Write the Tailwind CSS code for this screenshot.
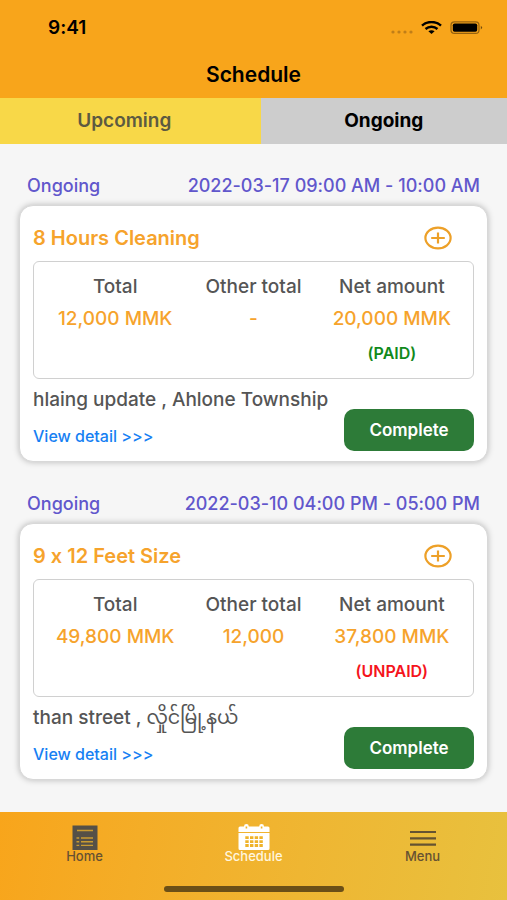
<!DOCTYPE html>
<html lang="en">
<head>
<meta charset="utf-8">
<meta name="viewport" content="width=device-width, initial-scale=1">
<title>Schedule</title>
<script src="https://cdn.jsdelivr.net/npm/@tailwindcss/browser@4"></script>
</head>
<body class="flex min-h-screen flex-col bg-[#f6f6f6] font-['Inter','Noto_Sans_Myanmar','Noto_Sans',sans-serif] text-[18px] leading-6 font-medium text-[#555] [font-feature-settings:'calt'_0]">
  <header class="bg-[#f8a51b] text-black">
    <div class="flex items-center justify-between pt-4 pr-6 pl-12">
      <span class="text-[19px] font-semibold">9:41</span>
      <div class="flex items-center gap-2">
        <svg class="mt-2 h-1 w-6" viewBox="0 0 24 4" fill="#c07e18" aria-hidden="true"><circle cx="4" cy="2" r="1.600"/><circle cx="10" cy="2" r="1.600"/><circle cx="16" cy="2" r="1.600"/><circle cx="22" cy="2" r="1.600"/></svg>
        <svg class="h-[14px] w-[21px]" viewBox="0 0 21 14" fill="none" stroke="#000" stroke-width="2.400" aria-hidden="true"><path d="M1 4.600C6.200 -.2 14.800 -.2 20 4.600"/><path d="M4.500 8C8 4.900 13 4.900 16.500 8"/><path d="M7.400 10.300C9.200 8.800 11.800 8.800 13.600 10.300L10.500 13.100Z" fill="#000" stroke="none"/></svg>
        <svg class="h-[14px] w-[33px]" viewBox="0 0 33 14" aria-hidden="true"><rect x="1" y=".8" width="28" height="11.600" rx="3.500" fill="none" stroke="#96620f" stroke-width="1.200"/><rect x="2.800" y="2.400" width="24.400" height="8.400" rx="1.800"/><path d="M30.800 4.800Q33.400 6.600 30.800 8.400Z" fill="#704a0c"/></svg>
      </div>
    </div>
    <h1 class="pt-[23px] pb-[11px] text-center text-[21px] font-semibold">Schedule</h1>
  </header>
  <div role="tablist" class="flex h-[46px] text-[19px]">
    <button role="tab" aria-selected="false" class="w-[51.4%] bg-[#f8d848] pr-3 font-semibold text-[#5d5a41]">Upcoming</button>
    <button role="tab" aria-selected="true" class="flex-1 bg-[#cdcdcd] font-bold text-black">Ongoing</button>
  </div>

  <main class="flex-1 px-[19px] pt-[30px]">
    <section class="mb-[30px]">
      <div class="flex justify-between px-2 pb-[7px] text-[#6157cc]"><span>Ongoing</span><span>2022-03-17 09:00 AM - 10:00 AM</span></div>
      <article class="rounded-[14px] border border-[#d8d8d8] bg-white px-[13px] pb-[10px] shadow-[0_0_6px_rgba(0,0,0,0.25)]">
        <div class="flex h-[55px] items-center justify-between pt-2 pr-[22px]">
          <h2 class="text-[20px] font-semibold text-[#f6a32c]">8 Hours Cleaning</h2>
          <button aria-label="Expand"><svg class="h-6 w-7" viewBox="0 0 28 24" fill="none" stroke="#eda028" stroke-width="2.200"><ellipse cx="14" cy="12" rx="12.600" ry="10.300"/><path d="M7.200 12H20.800M14 6.400V17.600"/></svg></button>
        </div>
        <div class="rounded-md border border-[#d0d0d0] px-3 pt-[9px] pb-[7px]">
          <table class="w-full table-fixed text-center text-[19px]">
            <thead><tr class="h-8"><th class="font-medium">Total</th><th class="font-medium">Other total</th><th class="font-medium">Net amount</th></tr></thead>
            <tbody>
              <tr class="h-8 text-[#f6a32c]"><td>12,000 MMK</td><td>-</td><td>20,000 MMK</td></tr>
              <tr class="h-9 text-[16px] font-semibold text-[#118a1b]"><td></td><td></td><td>(PAID)</td></tr>
            </tbody>
          </table>
        </div>
        <div class="flex items-end justify-between">
          <div class="flex h-[72px] min-w-0 flex-col justify-between pt-[9px]">
            <p class="w-0 text-[19px] whitespace-nowrap">hlaing update , Ahlone Township</p>
            <a href="#" class="pb-[3px] text-[16px] text-[#1680f3]">View detail &gt;&gt;&gt;</a>
          </div>
          <button class="h-[42px] w-[130px] rounded-[10px] bg-[#2d7b38] text-[17px] font-semibold text-white">Complete</button>
        </div>
      </article>
    </section>

    <section class="mb-[30px]">
      <div class="flex justify-between px-2 pb-[7px] text-[#6157cc]"><span>Ongoing</span><span>2022-03-10 04:00 PM - 05:00 PM</span></div>
      <article class="rounded-[14px] border border-[#d8d8d8] bg-white px-[13px] pb-[10px] shadow-[0_0_6px_rgba(0,0,0,0.25)]">
        <div class="flex h-[55px] items-center justify-between pt-2 pr-[22px]">
          <h2 class="text-[20px] font-semibold text-[#f6a32c]">9 x 12 Feet Size</h2>
          <button aria-label="Expand"><svg class="h-6 w-7" viewBox="0 0 28 24" fill="none" stroke="#eda028" stroke-width="2.200"><ellipse cx="14" cy="12" rx="12.600" ry="10.300"/><path d="M7.200 12H20.800M14 6.400V17.600"/></svg></button>
        </div>
        <div class="rounded-md border border-[#d0d0d0] px-3 pt-[9px] pb-[7px]">
          <table class="w-full table-fixed text-center text-[19px]">
            <thead><tr class="h-8"><th class="font-medium">Total</th><th class="font-medium">Other total</th><th class="font-medium">Net amount</th></tr></thead>
            <tbody>
              <tr class="h-8 text-[#f6a32c]"><td>49,800 MMK</td><td>12,000</td><td>37,800 MMK</td></tr>
              <tr class="h-9 text-[16px] font-semibold text-[#f5141c]"><td></td><td></td><td>(UNPAID)</td></tr>
            </tbody>
          </table>
        </div>
        <div class="flex items-end justify-between">
          <div class="flex h-[72px] min-w-0 flex-col justify-between pt-[9px]">
            <p class="w-0 text-[19px] whitespace-nowrap">than street , <span lang="my" class="font-normal">လှိုင်မြို့နယ်</span></p>
            <a href="#" class="pb-[3px] text-[16px] text-[#1680f3]">View detail &gt;&gt;&gt;</a>
          </div>
          <button class="h-[42px] w-[130px] rounded-[10px] bg-[#2d7b38] text-[17px] font-semibold text-white">Complete</button>
        </div>
      </article>
    </section>
  </main>

  <footer class="bg-linear-100 from-[#f8a51b] to-[#e8c13e]">
    <nav class="grid grid-cols-3 pt-3 text-[13px] leading-3 text-[#665132]">
      <a href="#" class="flex flex-col items-center"><svg class="h-[26px] w-[26px]" viewBox="0 0 26 26" aria-hidden="true"><path fill="#555047" d="M.5 1.500H25.500V26H.5Z"/><path d="M5 6.500H21M9 14H21M9 17.700H21M9 21.400H21M4.500 14H7.200M4.500 17.700H7.200M4.500 21.400H7.200" stroke="#c99b32" stroke-width="1.400"/></svg>Home</a>
      <a href="#" aria-current="page" class="flex flex-col items-center text-[#fff6df]"><svg class="h-[26px] w-8" viewBox="0 0 32 26" aria-hidden="true"><path fill="#fff" d="M2 2.500H6A2.400 2.400 0 0 1 10.800 2.500H21.200A2.400 2.400 0 0 1 26 2.500H30Q31.500 2.500 31.500 4V8H.5V4Q.5 2.500 2 2.500ZM.5 9H31.500V24.500Q31.500 26 30 26H2Q.5 26 .5 24.500Z"/><path fill="#efb32a" d="M7.600 2.500H9.200V4.400H7.600ZM22.800 2.500H24.400V4.400H22.800ZM7.300 12.300H10.700V15.100H7.300ZM12 12.300H15.400V15.100H12ZM16.700 12.300H20.100V15.100H16.700ZM21.400 12.300H24.800V15.100H21.400ZM7.300 16.200H10.700V19H7.300ZM12 16.200H15.400V19H12ZM16.700 16.200H20.100V19H16.700ZM21.400 16.200H24.800V19H21.400ZM7.300 20.100H10.700V22.900H7.300ZM12 20.100H15.400V22.900H12ZM16.700 20.100H20.100V22.900H16.700ZM21.400 20.100H24.800V22.900H21.400Z"/></svg>Schedule</a>
      <a href="#" class="flex flex-col items-center"><svg class="h-[26px] w-[26px]" viewBox="0 0 26 26" stroke="#655331" stroke-width="2.200" aria-hidden="true"><path d="M0 8H26M0 14.300H26M0 20.600H26"/></svg>Menu</a>
    </nav>
    <div class="mx-auto mt-6 mb-2 h-[6px] w-[180px] rounded-full bg-[#6b4f17]"></div>
  </footer>
</body>
</html>
